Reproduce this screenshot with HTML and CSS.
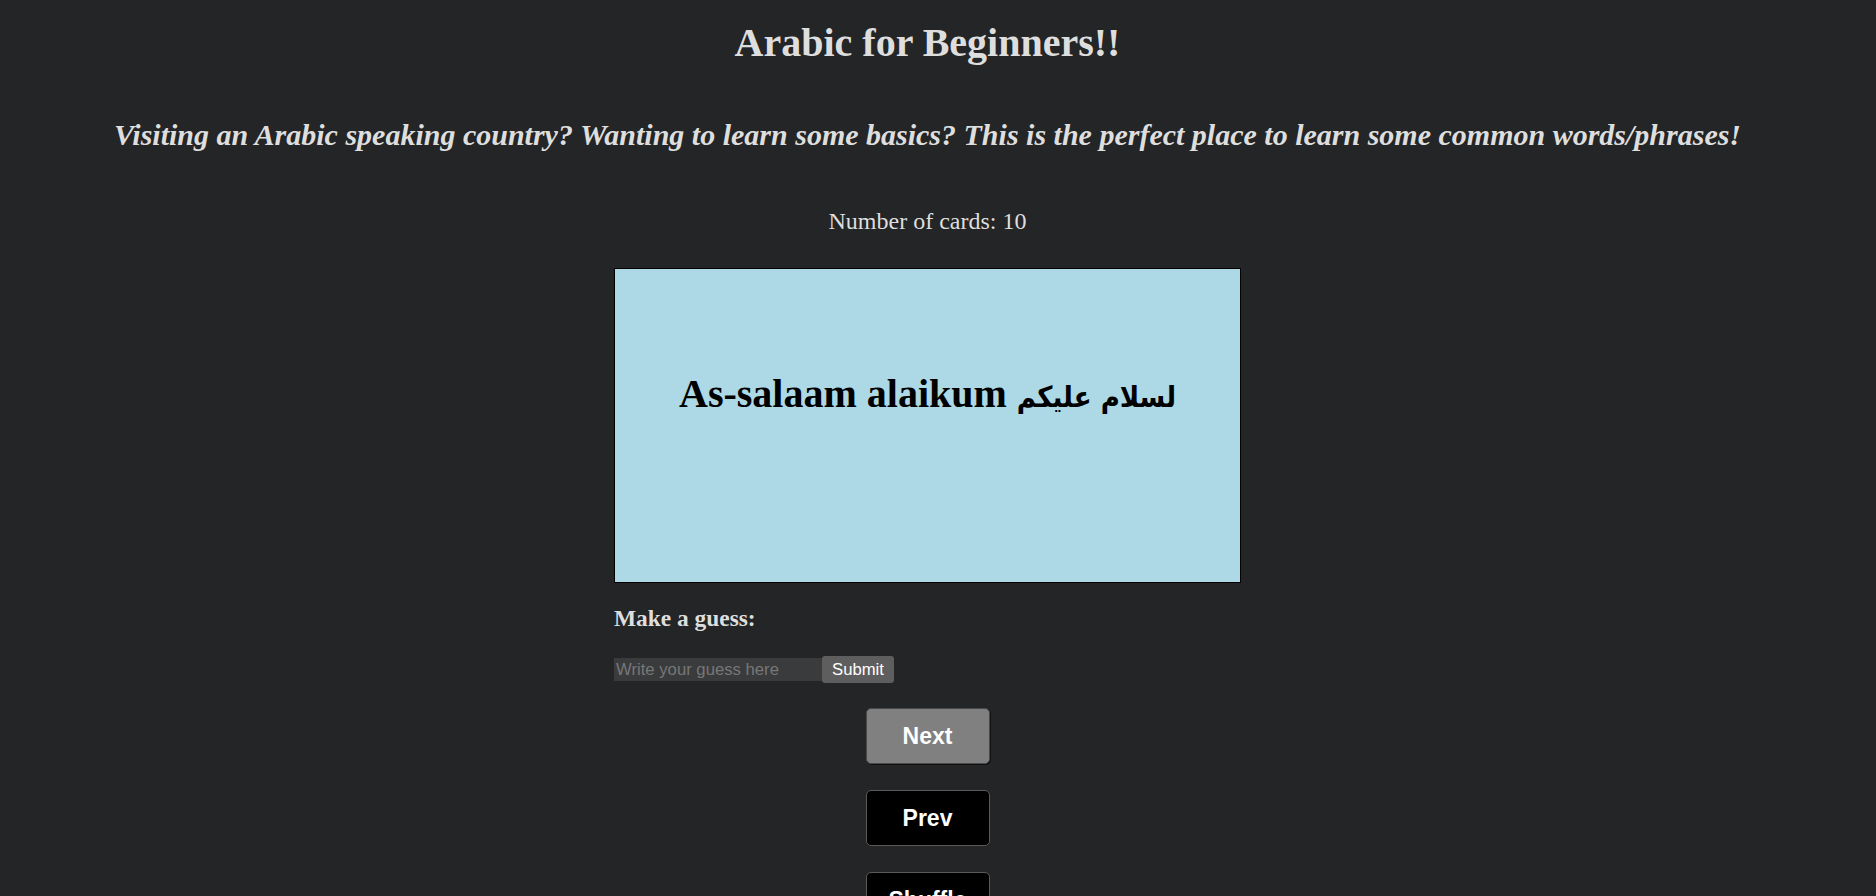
FILE: index.html
```html
<!DOCTYPE html>
<html lang="en">
<head>
<meta charset="utf-8">
<title>Arabic for Beginners!!</title>
<link rel="stylesheet" href="styles.css">
</head>
<body>
<div class="page">
  <h1 class="title">Arabic for Beginners!!</h1>
  <h2 class="subtitle">Visiting an Arabic speaking country? Wanting to learn some basics? This is the perfect place to learn some common words/phrases!</h2>
  <p class="count">Number of cards: 10</p>
  <div class="deck">
    <div class="card">
      <h1 class="card-text">As-salaam alaikum <span class="arabic" lang="ar">لسلام عليكم</span></h1>
    </div>
    <h3 class="guess-label">Make a guess:</h3>
    <form class="guess-row">
      <input class="guess-input" type="text" placeholder="Write your guess here">
      <button class="submit" type="button">Submit</button>
    </form>
  </div>
  <div class="controls">
    <button class="nav-btn nav-btn--hover" type="button">Next</button>
    <button class="nav-btn" type="button">Prev</button>
    <button class="nav-btn" type="button">Shuffle</button>
  </div>
</div>
</body>
</html>
```
FILE: styles.css
```css
html {
  overflow: hidden;
  background: #232526;
}
body {
  margin: 0;
  background: #232526;
  color: #dedede;
  font-family: "Liberation Serif", "Times New Roman", serif;
}
.page {
  padding: 0 31px 0 10px;
  text-align: center;
}
.title {
  margin: 20px 0 0;
  font-size: 40px;
  line-height: 46px;
  font-weight: bold;
}
.subtitle {
  margin: 51px 0 0;
  font-size: 30px;
  line-height: 35px;
  font-weight: bold;
  font-style: italic;
}
.count {
  margin: 55px 0 0;
  font-size: 24px;
  line-height: 28px;
}
.deck {
  width: 627px;
  margin: 33px auto 0;
  text-align: left;
}
.card {
  box-sizing: border-box;
  width: 627px;
  height: 315px;
  border: 1px solid #000;
  background: #add8e6;
  color: #000;
  padding-top: 102px;
  text-align: center;
}
.card-text {
  margin: 0;
  font-size: 40px;
  line-height: 46px;
  font-weight: bold;
  font-family: "Liberation Serif", "DejaVu Serif", serif;
}
.arabic {
  font-family: "DejaVu Sans Condensed", "DejaVu Sans", sans-serif;
  font-size: 29px;
  font-weight: bold;
}
.guess-label {
  margin: 22px 0 0;
  font-size: 23.4px;
  line-height: 27px;
  font-weight: bold;
}
.guess-row {
  display: flex;
  align-items: center;
  margin: 24px 0 0;
  height: 27px;
}
.guess-input {
  box-sizing: border-box;
  width: 208px;
  height: 23px;
  margin: 0;
  padding: 0 2px;
  border: none;
  outline: none;
  background: #3a3b3c;
  color: #dedede;
  font-family: "Liberation Sans", Arial, sans-serif;
  font-size: 16.7px;
}
.guess-input::placeholder {
  color: #777;
}
.submit {
  box-sizing: border-box;
  height: 27px;
  margin: 0;
  padding: 0 10px;
  border: none;
  border-radius: 3px;
  background: #5e5e5e;
  color: #fff;
  font-family: "Liberation Sans", Arial, sans-serif;
  font-size: 16.7px;
}
.controls {
  display: flex;
  flex-direction: column;
  align-items: center;
  gap: 26px;
  margin-top: 25px;
}
.nav-btn {
  box-sizing: border-box;
  width: 124px;
  height: 56px;
  margin: 0;
  padding: 0;
  border: 1.5px solid #5a5a5a;
  border-radius: 5px;
  background: #000;
  color: #fff;
  font-family: "Liberation Sans", Arial, sans-serif;
  font-size: 23px;
  font-weight: bold;
  flex: none;
}
.nav-btn--hover {
  background: #808080;
  border-color: #4a4a4a;
  box-shadow: 1px 1px 0 #111;
}
```
